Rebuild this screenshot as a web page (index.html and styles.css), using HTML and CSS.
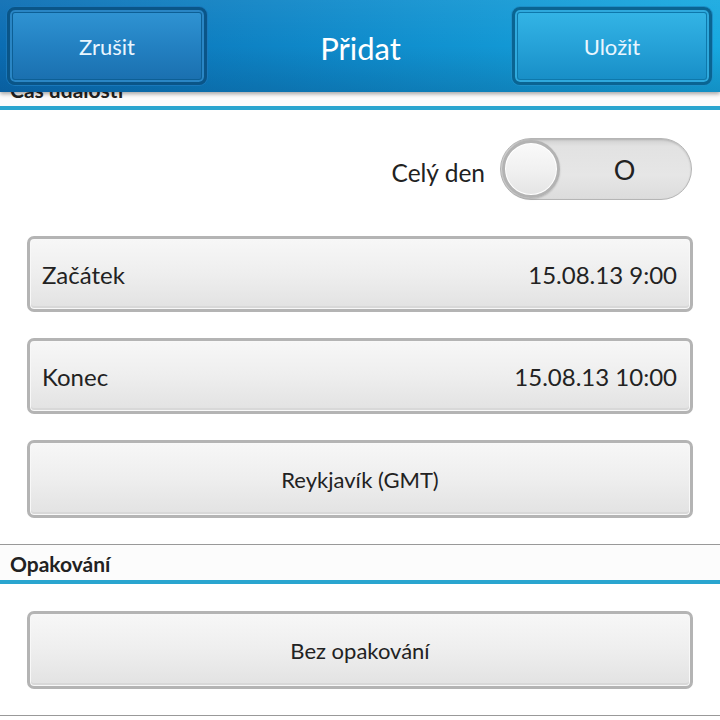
FILE: index.html
```html
<!DOCTYPE html>
<html lang="cs">
<head>
<meta charset="utf-8">
<title>Přidat</title>
<link rel="stylesheet" href="styles.css">
</head>
<body>
<header class="titlebar">
  <button class="hbtn hbtn-cancel">Zrušit</button>
  <h1 class="title">Přidat</h1>
  <button class="hbtn hbtn-save">Uložit</button>
</header>
<main class="content">
  <div class="section-head"><span>Čas události</span></div>
  <div class="toggle-row">
    <span class="toggle-label">Celý den</span>
    <div class="toggle"><div class="knob"></div><span class="toggle-text">O</span></div>
  </div>
  <div class="btn btn-split"><span>Začátek</span><span>15.08.13 9:00</span></div>
  <div class="btn btn-split"><span>Konec</span><span>15.08.13 10:00</span></div>
  <div class="btn btn-center small">Reykjavík (GMT)</div>
  <div class="section-head"><span>Opakování</span></div>
  <div class="btn btn-center small">Bez opakování</div>
  <div class="bottom-line"></div>
</main>
</body>
</html>
```
FILE: styles.css
```css
html, body {
  margin: 0;
  padding: 0;
  background: #fff;
  width: 720px;
  height: 720px;
  overflow: hidden;
  font-family: "Lato", "Open Sans", sans-serif;
  color: #222;
}
.titlebar {
  position: absolute;
  top: 0;
  left: 0;
  width: 720px;
  height: 92px;
  box-sizing: border-box;
  padding: 7px 8px 0 7px;
  display: flex;
  align-items: flex-start;
  justify-content: space-between;
  background:
    linear-gradient(to bottom, rgba(255,255,255,0.06) 0%, rgba(0,0,0,0) 50%, rgba(0,30,70,0.18) 100%),
    linear-gradient(to right, #0b6db3 0%, #0f8ccc 50%, #17a9e0 100%);
  box-shadow: 0 2px 4px rgba(0,0,0,0.35);
  z-index: 2;
}
.title {
  margin: 0;
  font-weight: normal;
  font-size: 31px;
  color: #fff;
  line-height: 82px;
  position: relative;
  left: 1px;
}
.hbtn {
  width: 200px;
  height: 78px;
  border-radius: 8px;
  font-family: "Lato", "Open Sans", sans-serif;
  font-size: 22px;
  color: #eaf6ff;
  padding: 0;
  cursor: pointer;
}
.hbtn-cancel {
  border: 3px solid #0a5588;
  background: linear-gradient(to bottom, #3094d3 0%, #2381c2 50%, #1a6fae 100%);
  box-shadow: inset 0 0 0 2px #2a86c5, inset 0 0 0 3px #0d5f95, 0 0 0 1px #1a78bb;
}
.hbtn-save {
  border: 3px solid #0a6492;
  background: linear-gradient(to bottom, #34b5e6 0%, #26a2d8 50%, #178dc6 100%);
  box-shadow: inset 0 0 0 2px #2fa9dd, inset 0 0 0 3px #0e78ab, 0 0 0 1px #1d8fc8;
}
.content {
  display: flex;
  flex-direction: column;
  padding-top: 70px;
}
.section-head {
  height: 35px;
  border-top: 1px solid #999;
  border-bottom: 4px solid #2aa5cf;
  background: #fcfcfc;
  padding-left: 10px;
  box-sizing: content-box;
  font-weight: bold;
  font-size: 21px;
  line-height: 38px;
  color: #222;
}
.toggle-row {
  display: flex;
  justify-content: flex-end;
  align-items: center;
  margin: 28px 28px 36px 0;
  gap: 15px;
}
.toggle-label {
  font-size: 24.5px;
  color: #222;
  position: relative;
  top: 3px;
}
.toggle {
  width: 192px;
  height: 62px;
  box-sizing: border-box;
  border-radius: 31px;
  border: 1px solid #b5b5b5;
  background: linear-gradient(to bottom, #d0d0d0 0%, #e2e2e2 12%, #e6e6e6 60%, #dcdcdc 100%);
  box-shadow: inset 0 1px 2px rgba(0,0,0,0.15);
  display: flex;
  align-items: center;
  padding-left: 1px;
}
.knob {
  width: 58px;
  height: 58px;
  box-sizing: border-box;
  border-radius: 50%;
  border: 3px solid #b3b3b3;
  background: linear-gradient(to bottom, #fafafa 0%, #efefef 60%, #e4e4e4 100%);
  box-shadow: inset 0 0 0 1px #ffffff, 0 1px 2px rgba(0,0,0,0.2);
}
.toggle-text {
  flex: 1;
  text-align: center;
  font-size: 27px;
  color: #222;
  padding-right: 2px;
}
.btn {
  margin: 0 27px;
  height: 76px;
  box-sizing: border-box;
  border: 3px solid #b4b4b4;
  border-radius: 7px;
  background: linear-gradient(to bottom, #f7f7f7 0%, #eeeeee 50%, #e2e2e2 100%);
  box-shadow: inset 0 0 0 1px #f8f8f8, inset 0 -2px 0 1px #d8d8d8;
  font-size: 24px;
  color: #222;
  display: flex;
  align-items: center;
}
.btn + .btn { margin-top: 26px; }
.btn-split {
  justify-content: space-between;
  padding: 0 13px 0 12px;
}
.btn-center {
  justify-content: center;
}
.small { font-size: 22px; height: 78px; }
.btn + .section-head { margin-top: 26px; }
.section-head + .btn { margin-top: 27px; }
.bottom-line {
  margin-top: 26px;
  border-top: 1px solid #999;
}
```
